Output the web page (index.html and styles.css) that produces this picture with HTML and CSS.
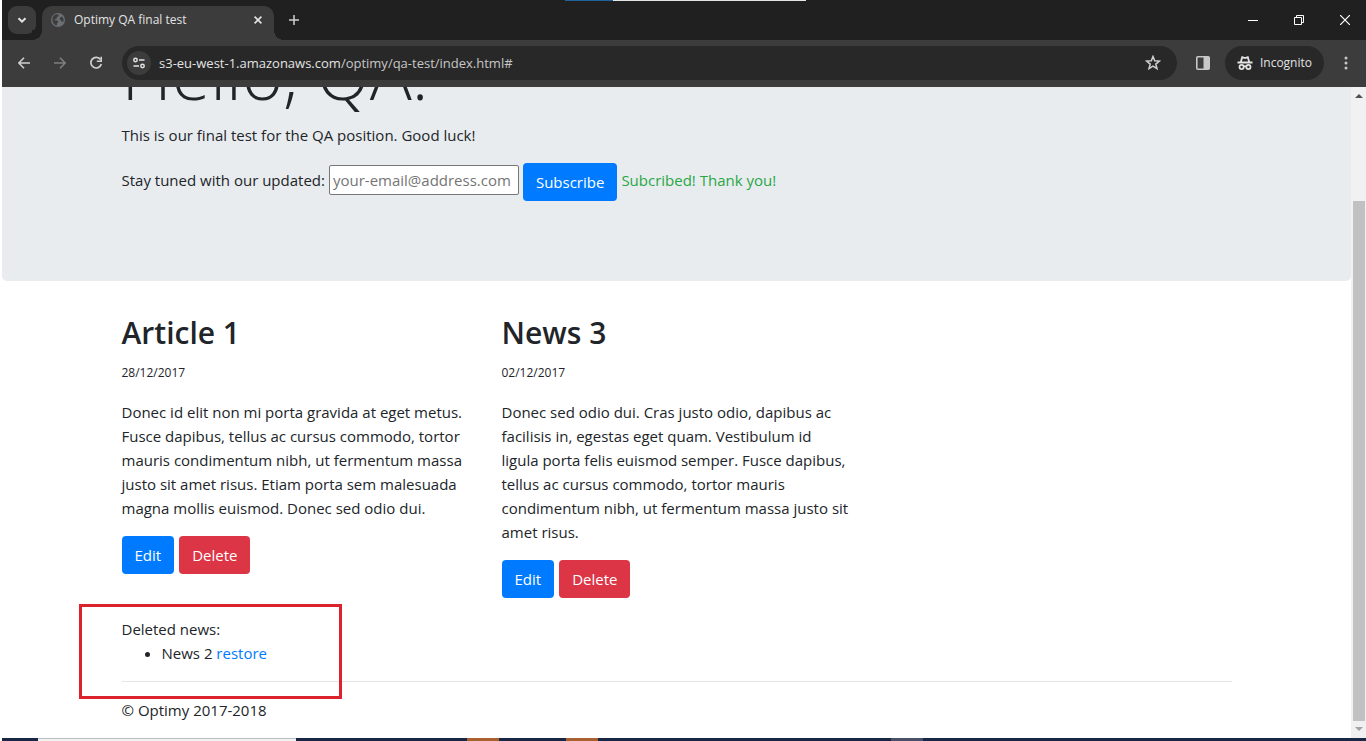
FILE: index.html
```html
<!DOCTYPE html>
<html lang="en">
<head>
<meta charset="utf-8">
<meta name="viewport" content="width=device-width, initial-scale=1">
<title>Optimy QA final test</title>
<link rel="stylesheet" href="styles.css">
</head>
<body>
<div class="window">
  <div class="tabstrip">
    <div class="overlay-strip"></div>
    <button class="tab-search" aria-label="Search tabs"><svg width="10" height="10" viewBox="0 0 10 10"><path d="M1.5 3.2 5 6.7l3.5-3.5" fill="none" stroke="#e3e3e3" stroke-width="2"/></svg></button>
    <div class="tab">
      <svg width="14" height="14" viewBox="0 0 14 14"><circle cx="7" cy="7" r="7" fill="#6b6e72"/><path d="M1.400 5.200C2 3 3.400 1.800 5.300 1.300L7.800 1.400 7.600 3 5.800 4.300 5.600 5.800 3.800 6.200 3.600 7.300 6.300 7.600 7.300 9 6 10.200 5.800 12.600C3 12 1.200 9.500 1.400 5.200ZM9.300 4.400 11 3.600 12.600 6.300 12.300 9 10.600 8.600 9.900 7 8.400 6.400Z" fill="#3c3c3c"/></svg>
      <span class="tab-title">Optimy QA final test</span>
      <button class="icon-button" aria-label="Close tab"><svg width="8" height="8" viewBox="0 0 8 8"><path d="M.6.6l6.800 6.800M7.400.6.6 7.400" stroke="#e3e3e3" stroke-width="1.600"/></svg></button>
    </div>
    <button class="new-tab" aria-label="New tab"><svg width="10" height="10" viewBox="0 0 10 10"><path d="M5 0v10M0 5h10" stroke="#d0d0d0" stroke-width="1.500"/></svg></button>
    <div class="window-controls">
      <button class="icon-button" aria-label="Minimize"><svg width="10" height="10" viewBox="0 0 10 10"><path d="M0 5.500h10" stroke="#fff"/></svg></button>
      <button class="icon-button" aria-label="Restore"><svg width="10" height="10" viewBox="0 0 10 10"><path d="M.5 2.500h7v7h-7zM2.500 2.500v-2h7v7h-2" fill="none" stroke="#fff"/></svg></button>
      <button class="icon-button" aria-label="Close"><svg width="10" height="10" viewBox="0 0 10 10"><path d="M0 0l10 10M10 0 0 10" stroke="#fff" stroke-width="1.200"/></svg></button>
    </div>
  </div>

  <div class="toolbar">
    <div class="nav">
      <button class="icon-button" aria-label="Back"><svg width="12" height="12" viewBox="0 0 12 12"><path d="M12 6H1.200M6 .8.8 6 6 11.200" fill="none" stroke="#d0d0d0" stroke-width="1.600"/></svg></button>
      <button class="icon-button" aria-label="Forward"><svg width="12" height="12" viewBox="0 0 12 12"><path d="M0 6h10.800M6 .8 11.200 6 6 11.200" fill="none" stroke="#7f7f7f" stroke-width="1.600"/></svg></button>
      <button class="icon-button" aria-label="Reload"><svg width="14" height="14" viewBox="0 0 14 14"><path d="M11.500 3.600A5.300 5.300 0 1 0 12.300 8" fill="none" stroke="#d0d0d0" stroke-width="1.700"/><path d="M13 .8V6H7.800V4.400h3.600V.8z" fill="#d0d0d0"/></svg></button>
    </div>
    <div class="omnibox">
      <button class="site-info" aria-label="Site information"><svg width="12" height="12" viewBox="0 0 12 12"><g fill="none" stroke="#e3e3e3" stroke-width="1.500"><circle cx="2.500" cy="3" r="1.700"/><circle cx="9.500" cy="9" r="1.700"/><path d="M6 3h5.500M.5 9H6"/></g></svg></button>
      <div class="url">s3-eu-west-1.amazonaws.com<span class="url-path">/optimy/qa-test/index.html#</span></div>
      <button class="icon-button" aria-label="Bookmark"><svg width="16" height="16" viewBox="0 0 16 16"><path d="M8 1.500l1.700 4.300 4.700.3-3.600 3 1.200 4.600L8 11.200l-4 2.500 1.200-4.600-3.600-3 4.700-.3z" fill="none" stroke="#d0d0d0" stroke-width="1.500"/></svg></button>
    </div>
    <button class="icon-button" aria-label="Side panel"><svg width="14" height="14" viewBox="0 0 14 14"><rect x=".8" y=".8" width="12.400" height="12.400" rx="1" fill="none" stroke="#c7c7c7" stroke-width="1.600"/><path d="M7.500 1H13v12H7.500z" fill="#c7c7c7"/></svg></button>
    <button class="incognito"><svg width="16" height="16" viewBox="0 0 16 16"><g fill="none" stroke="#e3e3e3" stroke-width="1.800"><path d="M.5 7.500h15M3.800 7l1.400-4.800 2.800.8 2.800-.8L12.200 7"/><circle cx="4.600" cy="12" r="2.100"/><circle cx="11.400" cy="12" r="2.100"/><path d="M6.700 11.600q1.300-.8 2.600 0"/></g></svg><span>Incognito</span></button>
    <button class="icon-button" aria-label="Menu"><svg width="4" height="14" viewBox="0 0 4 14" fill="#c7c7c7"><circle cx="2" cy="2" r="1.500"/><circle cx="2" cy="7" r="1.500"/><circle cx="2" cy="12" r="1.500"/></svg></button>
  </div>

  <div class="viewport">
    <div class="page">
      <header class="jumbotron">
        <div class="container">
          <h1>Hello, QA!</h1>
          <p>This is our final test for the QA position. Good luck!</p>
          <form class="subscribe">
            <label for="email">Stay tuned with our updated:</label>
            <input id="email" type="email" placeholder="your-email@address.com">
            <button type="button" class="btn btn-primary">Subscribe</button>
            <output class="success">Subcribed! Thank you!</output>
          </form>
        </div>
      </header>
      <main class="container">
        <div class="row">
          <article class="news">
            <h2>Article 1</h2>
            <p class="date">28/12/2017</p>
            <p>Donec id elit non mi porta gravida at eget metus. Fusce dapibus, tellus ac cursus commodo, tortor mauris condimentum nibh, ut fermentum massa justo sit amet risus. Etiam porta sem malesuada magna mollis euismod. Donec sed odio dui.</p>
            <div class="actions"><button class="btn btn-primary">Edit</button><button class="btn btn-danger">Delete</button></div>
          </article>
          <article class="news">
            <h2>News 3</h2>
            <p class="date">02/12/2017</p>
            <p>Donec sed odio dui. Cras justo odio, dapibus ac facilisis in, egestas eget quam. Vestibulum id ligula porta felis euismod semper. Fusce dapibus, tellus ac cursus commodo, tortor mauris condimentum nibh, ut fermentum massa justo sit amet risus.</p>
            <div class="actions"><button class="btn btn-primary">Edit</button><button class="btn btn-danger">Delete</button></div>
          </article>
        </div>
        <section class="deleted">
          <div>Deleted news:</div>
          <ul>
            <li>News 2 <a href="#">restore</a></li>
          </ul>
          <div class="highlight"></div>
        </section>
        <hr>
      </main>
      <footer class="container"><p>© Optimy 2017-2018</p></footer>
    </div>
    <div class="scrollbar">
      <svg width="8" height="4" viewBox="0 0 8 4"><path d="M0 4 4 0l4 4z" fill="#505050"/></svg>
      <div class="thumb"></div>
      <svg width="8" height="4" viewBox="0 0 8 4"><path d="M0 0l4 4 4-4z" fill="#a3a3a3"/></svg>
    </div>
  </div>
  <div class="taskbar">
    <div class="task-search"></div>
    <div class="task-app task-first"></div>
    <div class="task-app"></div>
    <div class="task-app task-active"></div>
  </div>
</div>
</body>
</html>
```
FILE: styles.css
```css
* { box-sizing: border-box; }
body {
  margin: 0;
  background: #fff;
  color: #212529;
  font: 15px/24px "Segoe UI", "Open Sans", "Noto Sans", sans-serif;
}
button, input { font: inherit; }
button { border: 0; padding: 0; background: none; color: inherit; }
svg { display: block; flex: none; }

.window {
  display: flex;
  flex-direction: column;
  height: 100vh;
  padding-left: 2px;
  overflow: hidden;
}

/* Browser chrome */
.tabstrip {
  position: relative;
  display: flex;
  flex: none;
  height: 40px;
  padding-left: 6px;
  background: #202020;
}
.overlay-strip {
  position: absolute;
  top: 0;
  left: 563px;
  width: 241px;
  height: 1px;
  background: linear-gradient(to right, #1f6299 48px, #e4e6e4 48px);
}
.icon-button { display: grid; place-items: center; }
.tab-search {
  display: grid;
  place-items: center;
  width: 28px;
  height: 28px;
  margin-top: 6px;
  border-radius: 9px;
  background: #3c3c3c;
}
.tab {
  position: relative;
  display: flex;
  align-items: center;
  gap: 9px;
  width: 232px;
  margin: 6px 0 0 6px;
  padding: 0 12px 6px 9px;
  border-radius: 10px 10px 0 0;
  background: #3c3c3c;
  color: #e3e3e3;
  font-size: 12px;
}
.tab::before, .tab::after {
  content: "";
  position: absolute;
  bottom: 0;
  width: 10px;
  height: 10px;
}
.tab::before { right: 100%; background: radial-gradient(circle at 0 0, #202020 10px, #3c3c3c 10px); }
.tab::after { left: 100%; background: radial-gradient(circle at 100% 0, #202020 10px, #3c3c3c 10px); }
.tab-title { flex: 1; white-space: nowrap; }
.new-tab { display: grid; place-items: center; width: 40px; }
.window-controls {
  display: flex;
  gap: 36px;
  margin-left: auto;
  padding-right: 16px;
}
.toolbar {
  display: flex;
  flex: none;
  align-items: center;
  gap: 15px;
  height: 47px;
  padding: 0 18px 2px 15px;
  background: #3c3c3c;
  color: #e3e3e3;
}
.nav { display: flex; gap: 22px; align-items: center; margin-right: 4px; }
.nav .icon-button { width: 14px; }
.omnibox {
  display: flex;
  flex: 1;
  align-items: center;
  height: 34px;
  margin-right: 4px;
  padding: 0 16px 0 5px;
  border-radius: 17px;
  background: #282828;
  font-size: 13px;
}
.site-info {
  display: grid;
  place-items: center;
  width: 24px;
  height: 24px;
  margin-right: 8px;
  border-radius: 50%;
  background: #3c3c3c;
}
.url { flex: 1; white-space: nowrap; }
.url-path { color: #c7c7c7; }
.incognito {
  display: flex;
  align-items: center;
  gap: 7px;
  height: 34px;
  margin-right: 5px;
  padding: 0 12px;
  border-radius: 17px;
  background: #282828;
  font-size: 12px;
}

/* Page, scrolled to its end */
.viewport { display: flex; flex: 1; min-height: 0; }
.page {
  display: flex;
  flex: 1;
  flex-direction: column;
  justify-content: flex-end;
  overflow: hidden;
}
.container { width: 100%; max-width: 1140px; margin: 0 auto; padding: 0 15px; }
p { margin: 0 0 16px; }
.jumbotron {
  margin-bottom: 32px;
  padding: 64px 0;
  border-radius: 5px;
  background: #e9ecef;
}
h1 { margin: 0 0 6px; font-size: 70px; font-weight: 300; line-height: 88px; }
.subscribe {
  display: flex;
  align-items: flex-start;
  gap: 4px;
  margin-bottom: 16px;
  line-height: 34px;
}
.subscribe input {
  width: 190px;
  height: 30px;
  margin: 2px 0;
  padding: 1px 3px;
  border: 1px solid #767676;
  border-radius: 2px;
  background: #fff;
}
.subscribe input::placeholder { color: #757575; }
.success { color: #28a745; }
.btn {
  height: 38px;
  padding: 0 13px;
  border-radius: 4px;
  color: #fff;
  line-height: 24px;
}
.btn-primary { background: #007bff; }
.btn-danger { background: #dc3545; }
.row { display: grid; grid-template-columns: repeat(3, 1fr); gap: 30px; }
h2 { margin: 0 0 8px; font-size: 30px; font-weight: 600; line-height: 39px; }
.date { padding-top: 2px; font-size: 12px; line-height: 22px; }
.actions { display: flex; gap: 5px; margin-bottom: 19px; }
.deleted { position: relative; }
.deleted ul { margin: 0; padding-left: 40px; }
.deleted a { color: #007bff; text-decoration: none; }
.highlight {
  position: absolute;
  top: -13px;
  left: -43px;
  width: 263px;
  height: 95px;
  border: 3px solid #dc232d;
}
hr { margin: 16px 0; border: 0; border-top: 1px solid #e5e5e5; }
.scrollbar {
  display: flex;
  flex: none;
  flex-direction: column;
  align-items: center;
  width: 15px;
  padding: 7px 1px 7px 2px;
  background: #f1f1f1;
}
.thumb { flex: 1; width: 100%; margin: 103px 0 6px; background: #c1c1c1; }

/* Top edge of the desktop taskbar */
.taskbar { display: flex; flex: none; height: 3px; padding-left: 36px; background: #1a2744; }
.task-search { width: 258px; border-top: 1px solid #bdbdbd; background: #f2f2f2; }
.task-app { width: 32px; margin-right: 67px; background: #a9612f; }
.task-first { margin-left: 171px; }
.task-active { margin-left: 226px; background: #4b5069; }
```
